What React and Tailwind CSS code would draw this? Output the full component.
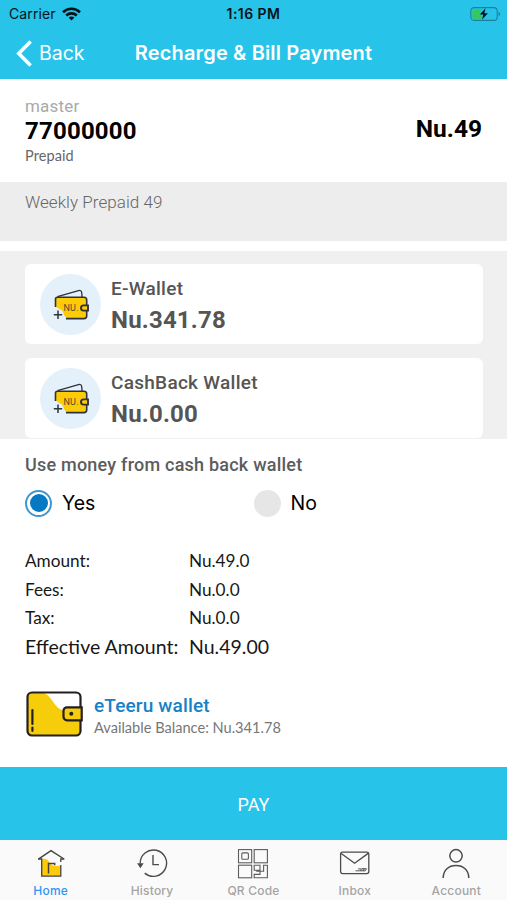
import React from "react";

function WifiIcon() {
  return (
    <svg width="19" height="14" viewBox="0 0 19 14" fill="none" stroke="#05141a" strokeWidth="2.6">
      <path d="M1 5.2C5.700.6 13.300.6 18 5.200" />
      <path d="M4.200 8.500c3-2.800 7.600-2.800 10.600 0" />
      <path d="M9.500 13.400 6.600 10.600c1.600-1.400 4.200-1.400 5.800 0z" fill="#05141a" stroke="none" />
    </svg>
  );
}

function BatteryIcon() {
  return (
    <svg width="31" height="14" viewBox="0 0 31 14">
      <rect x="0.8" y="0.6" width="26.4" height="12.8" rx="3.4" fill="none" stroke="#1a8298" strokeWidth="1.1" />
      <path d="M4 2.200h7.500L9 7.600h3l-.6 4.200H4a1.600 1.600 0 0 1-1.600-1.600V3.800A1.600 1.600 0 0 1 4 2.200z" fill="#35c95b" />
      <path d="M28.600 4.800c2 .8 2 3.600 0 4.400z" fill="#1a8298" />
      <path d="M15.600 1.200 9.800 7.600h3.500l-1.300 5.200 5.900-6.600h-3.600z" fill="#02161c" />
    </svg>
  );
}

function SmallWallet() {
  return (
    <svg width="61" height="61" viewBox="0 0 61 61" fill="none" className="shrink-0">
      <circle cx="30.5" cy="30.5" r="30.5" fill="#e4f1fa" />
      <path d="M16.500 23.500H44.500a2.400 2.400 0 0 1 2.400 2.400V42a2.400 2.400 0 0 1-2.400 2.400H26.500c-1-2.600-2.500-2.300-3-5-.6-4-4.500-3.600-8-7.400V25a1.500 1.500 0 0 1 1-1.500z" fill="#fecb09" />
      <path d="M15.500 33V25.300a2 2 0 0 1 2-2H44a2.700 2.700 0 0 1 2.700 2.700V42a2.700 2.700 0 0 1-2.700 2.600H26" stroke="#2c333d" strokeWidth="1.600" />
      <path d="M17.500 22.700 38.500 16.600c1.800-.5 3 .2 3.200 2l.4 4.500" stroke="#2c333d" strokeWidth="1.300" />
      <text x="23.500" y="37" fontSize="9" fill="#4b4a25" className="font-['Roboto',sans-serif]" textLength="15">NU.</text>
      <path d="M48 31.400h-4.400a2.600 2.600 0 0 0 0 5.200H48z" fill="#fecb09" stroke="#2c333d" strokeWidth="1.900" />
      <path d="M18 36.500v8.400M13.800 40.700h8.400" stroke="#2c333d" strokeWidth="1.500" />
    </svg>
  );
}

function LargeWallet() {
  return (
    <svg width="58" height="46" viewBox="0 0 58 46" fill="none" className="shrink-0">
      <rect x="2.500" y="1.500" width="53" height="43" rx="4.500" fill="#fff" />
      <path d="M7 1.500h8c13 0 13 18 25.500 18h15V40a4.500 4.500 0 0 1-4.500 4.500H7A4.500 4.500 0 0 1 2.500 40V6A4.500 4.500 0 0 1 7 1.500z" fill="#f6cd0b" />
      <rect x="2.500" y="1.500" width="53" height="43" rx="4.500" stroke="#231f20" strokeWidth="2.200" />
      <path d="M56.700 16.300H42a3.500 3.500 0 0 0-3.500 3.500v6a3.500 3.500 0 0 0 3.500 3.500h14.700z" fill="#f6cd0b" stroke="#231f20" strokeWidth="2.200" />
      <circle cx="46.300" cy="22.700" r="2" fill="#231f20" />
      <path d="M7.400 19v14M7.400 36.500v3.300" stroke="#231f20" strokeWidth="2.200" strokeLinecap="round" />
    </svg>
  );
}

function WalletCard({ name, amount }) {
  return (
    <div className="flex h-[80px] shrink-0 items-center rounded-md bg-white px-[15px]">
      <SmallWallet />
      <div className="ml-[10px] flex flex-col font-['Roboto',sans-serif] text-[#555]">
        <span className="h-[31px] text-[19px] font-medium leading-[31px] tracking-[0.28px]">{name}</span>
        <span className="h-[32px] text-[24px] font-bold leading-[32px] tracking-[0.2px]">{amount}</span>
      </div>
    </div>
  );
}

function HomeIcon() {
  return (
    <svg width="34" height="32" viewBox="0 0 34 32" fill="none">
      <path d="M7.700 11c4-1 6.500 1 7.800 3.500 2 3.500 6 4 11 3V28H7.700z" fill="#fecb09" />
      <path d="M4.400 11.200 17 2.600l13 8.400" stroke="#444" strokeWidth="1.400" />
      <path d="M4.200 11h3.500v17.200h19.100V17M26.800 14v-3h3.500" stroke="#444" strokeWidth="1.300" />
      <path d="M14.500 25.500V15.600h6.200v1.700" stroke="#444" strokeWidth="1.500" />
    </svg>
  );
}

function HistoryIcon() {
  return (
    <svg width="34" height="32" viewBox="0 0 34 32" fill="none" stroke="#4b4b4b" strokeWidth="1.400">
      <path d="M5.200 15.500A13.200 13.200 0 1 1 9.700 25.100" />
      <path d="M3.400 15.900h4l-2 3z" fill="#444" />
      <path d="M18 7v9.600h6" />
    </svg>
  );
}

function QrIcon() {
  return (
    <svg width="34" height="32" viewBox="0 0 34 32" fill="none" stroke="#5c5c5c" strokeWidth="1.100">
      <rect x="2.500" y="1.600" width="13.200" height="13.200" />
      <rect x="5.800" y="4.900" width="6.600" height="6.400" rx="1" />
      <rect x="18.200" y="1.600" width="13.200" height="13.200" />
      <rect x="2.500" y="17.200" width="13.200" height="12.600" />
      <path d="M18.200 17.200h5.800v5h-5.800zM24 19.800v3.400h3.600v-6h3.800v12.600H18.200v-3.400h5.800v-3.200h-3.200v-1" />
    </svg>
  );
}

function InboxIcon() {
  return (
    <svg width="34" height="32" viewBox="0 0 34 32" fill="none" stroke="#4b4b4b" strokeWidth="1.300">
      <rect x="2.600" y="4.200" width="28.200" height="21.400" rx="2" />
      <path d="m3.200 5.400 13.400 9.900L30.200 5.400" />
      <path d="M17.500 22.800h7.800l1-1.900h-3l-.7 1.900M20 20.900h3M24.500 20.700h4l-1.200 2.100h-2.500" strokeWidth="0.900" />
    </svg>
  );
}

function AccountIcon() {
  return (
    <svg width="34" height="32" viewBox="0 0 34 32" fill="none" stroke="#4b4b4b" strokeWidth="1.500">
      <circle cx="17" cy="7.800" r="6.200" />
      <path d="M4.200 30c0-8 5.600-12.400 12.800-12.400S29.800 22 29.800 30" />
    </svg>
  );
}

const charges = [
  ["Amount:", "Nu.49.0"],
  ["Fees:", "Nu.0.0"],
  ["Tax:", "Nu.0.0"],
];

const tabs = [
  ["Home", HomeIcon],
  ["History", HistoryIcon],
  ["QR Code", QrIcon],
  ["Inbox", InboxIcon],
  ["Account", AccountIcon],
];

export default function App() {
  return (
    <div className="flex h-[900px] w-[507px] flex-col overflow-hidden bg-white">
      <header className="flex h-[79px] shrink-0 flex-col bg-[#27c3e9] font-['Inter',sans-serif]">
        <div className="grid h-[27px] grid-cols-[1fr_80px_1fr] items-center pl-[9px] pr-[9px] text-[14px] leading-[27px] text-[#05141a]">
          <div className="flex items-center gap-[6px]">
            <span className="tracking-[0.1px]">Carrier</span>
            <WifiIcon />
          </div>
          <span className="text-center text-[14px] font-semibold tracking-[0.45px]">1:16 PM</span>
          <div className="-mr-[3px] flex justify-end">
            <BatteryIcon />
          </div>
        </div>
        <div className="grid h-[52px] grid-cols-[110px_1fr_110px] items-center text-white">
          <div className="flex items-center pl-[16px]">
            <svg width="17" height="27" viewBox="0 0 17 27" fill="none" stroke="white" strokeWidth="3.600">
              <path d="M14.600 1.500 2.800 13.500l11.800 12" />
            </svg>
            <span className="ml-[6px] text-[19.500px] leading-[26px]">Back</span>
          </div>
          <h1 className="whitespace-nowrap text-center text-[20px] font-semibold leading-[26px] tracking-[0.15px]">Recharge &amp; Bill Payment</h1>
        </div>
      </header>

      <section className="flex h-[103px] shrink-0 justify-between px-[25px] pt-[15px] font-['Roboto',sans-serif]">
        <div className="flex flex-col">
          <span className="h-[23px] text-[17px] leading-[24px] tracking-[0.2px] text-[#a9a9a9]">master</span>
          <span className="h-[28px] text-[24px] font-bold leading-[28px] tracking-[0.2px] text-black">77000000</span>
          <span className="h-[20px] font-['Lato',sans-serif] text-[14.500px] leading-[21px] tracking-[0.1px] text-[#666]">Prepaid</span>
        </div>
        <span className="mt-[19px] h-[30px] text-[24.500px] font-bold leading-[31px] text-black">Nu.49</span>
      </section>

      <section className="h-[59px] shrink-0 bg-[#ededed] px-[25px] pt-[7px] font-['Roboto',sans-serif] text-[17px] font-light leading-[26px] tracking-[0.05px] text-[#666]">
        Weekly Prepaid 49
      </section>

      <section className="mt-[10px] flex h-[188px] shrink-0 flex-col gap-[14px] overflow-hidden bg-[#f0f0f0] pl-[25px] pr-[24px] pt-[13px]">
        <WalletCard name="E-Wallet" amount="Nu.341.78" />
        <WalletCard name="CashBack Wallet" amount="Nu.0.00" />
      </section>

      <section className="flex h-[328px] shrink-0 flex-col px-[25px] pt-[13px]">
        <h2 className="h-[25px] font-['Roboto',sans-serif] text-[18px] font-medium leading-[25px] tracking-[0.22px] text-[#5c5c5c]">
          Use money from cash back wallet
        </h2>
        <div className="mt-[11px] grid h-[30px] grid-cols-2 items-center font-['Inter',sans-serif] text-[19.500px] leading-[30px] text-black">
          <label className="flex items-center gap-[10px]">
            <span className="flex size-[27px] items-center justify-center rounded-full border-2 border-[#3f95cf] bg-white">
              <span className="size-[18px] rounded-full bg-[#057ac2]" />
            </span>
            Yes
          </label>
          <label className="flex items-center gap-[10px]">
            <span className="size-[27px] rounded-full bg-[#e6e6e6]" />
            No
          </label>
        </div>
        <dl className="mt-[29px] grid grid-cols-[164px_1fr] font-['Lato',sans-serif] text-[17.200px] leading-[28.500px] text-[#171717]">
          {charges.map(([label, value]) => (
            <React.Fragment key={label}>
              <dt>{label}</dt>
              <dd>{value}</dd>
            </React.Fragment>
          ))}
          <dt className="text-[19.500px]">Effective Amount:</dt>
          <dd className="text-[19.500px]">Nu.49.00</dd>
        </dl>
        <div className="mt-[30px] flex items-center">
          <LargeWallet />
          <div className="ml-[11px] mt-[2px] flex flex-col">
            <span className="h-[23px] font-['Roboto',sans-serif] text-[19px] font-medium leading-[24px] tracking-[0.15px] text-[#1682c6]">eTeeru wallet</span>
            <span className="h-[20px] font-['Lato',sans-serif] text-[14.600px] leading-[21px] text-[#777]">Available Balance: Nu.341.78</span>
          </div>
        </div>
      </section>

      <button className="h-[73px] shrink-0 bg-[#27c3e9] pt-[2px] font-['Roboto',sans-serif] text-[18px] text-white">PAY</button>

      <nav className="grid h-[60px] shrink-0 grid-cols-5 bg-[#fafafa] pt-[8px] font-['Inter',sans-serif]">
        {tabs.map(([label, Icon], i) => (
          <div key={label} className="flex flex-col items-center">
            <Icon />
            <span className={"mt-[3px] text-[12px] font-medium leading-[16px] tracking-[0.2px] " + (i === 0 ? "text-[#2f96f3]" : "text-[#a4a4a4]")}>
              {label}
            </span>
          </div>
        ))}
      </nav>
    </div>
  );
}
